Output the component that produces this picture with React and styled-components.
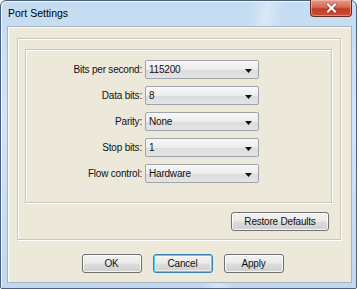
import React from "react";
import styled, { createGlobalStyle, css } from "styled-components";

const GlobalStyle = createGlobalStyle`
  html, body {
    margin: 0;
    padding: 0;
    background: #ffffff;
  }
  body {
    font-family: "Liberation Sans", Arial, sans-serif;
  }
`;

const rows = [
  { label: "Bits per second:", value: "115200" },
  { label: "Data bits:", value: "8" },
  { label: "Parity:", value: "None" },
  { label: "Stop bits:", value: "1" },
  { label: "Flow control:", value: "Hardware" }
];

function CloseGlyph() {
  return (
    <svg width="11" height="10" viewBox="0 0 11 10">
      <path
        d="M2 1.5 L9 8.5 M9 1.5 L2 8.5"
        stroke="#3a1a14"
        strokeWidth="3.2"
        strokeLinecap="square"
        opacity="0.45"
      />
      <path
        d="M2 1.5 L9 8.5 M9 1.5 L2 8.5"
        stroke="#ffffff"
        strokeWidth="2"
        strokeLinecap="square"
      />
    </svg>
  );
}

function Arrow() {
  return (
    <svg width="7" height="4" viewBox="0 0 7 4">
      <path d="M0 0 H7 L3.5 4 Z" fill="#111" />
    </svg>
  );
}

function App() {
  return (
    <>
      <GlobalStyle />
      <Window>
        <TitleBar>
          <Title>Port Settings</Title>
          <CloseButton>
            <CloseGlyph />
          </CloseButton>
        </TitleBar>
        <Client>
          <OuterGroup>
            <InnerGroup>
              {rows.map(r => (
                <Row key={r.label}>
                  <Label>{r.label}</Label>
                  <Combo>
                    <span>{r.value}</span>
                    <Arrow />
                  </Combo>
                </Row>
              ))}
            </InnerGroup>
            <RestoreBar>
              <Button wide>Restore Defaults</Button>
            </RestoreBar>
          </OuterGroup>
          <ButtonBar>
            <Button>OK</Button>
            <Button focused>Cancel</Button>
            <Button>Apply</Button>
          </ButtonBar>
        </Client>
      </Window>
    </>
  );
}

const Window = styled.div`
  box-sizing: border-box;
  width: 357px;
  height: 289px;
  display: flex;
  flex-direction: column;
  padding: 0 4px 5px 6px;
  border: 1px solid #4a627d;
  border-radius: 6px 6px 2px 2px;
  background:
    linear-gradient(100deg, rgba(255,255,255,0) 0%, rgba(255,255,255,0) 62%, rgba(255,255,255,0.35) 66%, rgba(255,255,255,0) 70%),
    linear-gradient(180deg, #c4dbf1 0%, #d2e5f6 40%, #c3d8ee 100%);
  box-shadow: inset 1px 1px 0 rgba(255,255,255,0.7);
`;

const TitleBar = styled.div`
  display: flex;
  align-items: flex-start;
  height: 25px;
  flex: none;
`;

const Title = styled.div`
  font-family: "Liberation Sans", Arial, sans-serif;
  font-size: 10.5px;
  color: #000;
  padding: 6px 0 0 1px;
  flex: 1;
`;

const CloseButton = styled.div`
  box-sizing: border-box;
  width: 42px;
  height: 17px;
  margin-top: -1px;
  display: flex;
  align-items: center;
  justify-content: center;
  border: 1px solid #6d2a20;
  border-top: none;
  border-radius: 0 0 4px 4px;
  background: linear-gradient(180deg, #e59a8a 0%, #d66a52 45%, #c23c26 55%, #c94f36 100%);
  box-shadow: inset 0 0 0 1px rgba(255,210,200,0.45);
`;

const Client = styled.div`
  flex: 1;
  display: flex;
  flex-direction: column;
  background: #ece9da;
  border: 1px solid #a7b3c1;
  box-shadow: inset 1px 1px 0 #fbfaf4;
  padding: 11px 10px 0 9px;
`;

const etched = css`
  border: 1px solid #cbc7b6;
  box-shadow: inset 1px 1px 0 #ffffff, 1px 1px 0 #ffffff;
`;

const OuterGroup = styled.div`
  ${etched};
  height: 202px;
  box-sizing: border-box;
  padding: 10px 8px 0 7px;
  display: flex;
  flex-direction: column;
`;

const InnerGroup = styled.div`
  ${etched};
  box-sizing: border-box;
  height: 154px;
  padding-top: 10px;
  display: flex;
  flex-direction: column;
  gap: 7px;
`;

const Row = styled.div`
  display: grid;
  grid-template-columns: 116px 114px;
  column-gap: 3px;
  align-items: center;
`;

const Label = styled.div`
  text-align: right;
  font-size: 10px;
  letter-spacing: -0.2px;
  color: #111;
`;

const Combo = styled.div`
  box-sizing: border-box;
  height: 19px;
  display: flex;
  align-items: center;
  justify-content: space-between;
  padding: 0 6px 0 3px;
  border: 1px solid #9fa4aa;
  border-radius: 2px;
  background: linear-gradient(180deg, #f8f8f8 0%, #ececec 50%, #dcdcdc 51%, #e4e4e4 100%);
  font-size: 10px;
  letter-spacing: -0.2px;
  color: #111;
  svg {
    margin-top: 2px;
  }
`;

const RestoreBar = styled.div`
  display: flex;
  justify-content: flex-end;
  padding: 9px 3px 0 0;
`;

const ButtonBar = styled.div`
  display: flex;
  justify-content: center;
  gap: 11px;
  padding: 14px 0 0 7px;
`;

const Button = styled.div`
  box-sizing: border-box;
  width: ${p => (p.wide ? "98px" : "60px")};
  height: 19px;
  display: flex;
  align-items: center;
  justify-content: center;
  font-size: 10px;
  letter-spacing: -0.2px;
  color: #111;
  border: 1px solid #707070;
  border-radius: 3px;
  background: linear-gradient(180deg, #f2f2f2 0%, #ebebeb 48%, #dddddd 52%, #cfcfcf 100%);
  box-shadow: inset 0 0 0 1px rgba(255,255,255,0.8);
  ${p =>
    p.focused &&
    css`
      border-color: #3c7fb1;
      box-shadow: inset 0 0 0 1px #48d3fb, inset 0 0 0 2px rgba(255,255,255,0.6);
    `}
`;

export default App;
